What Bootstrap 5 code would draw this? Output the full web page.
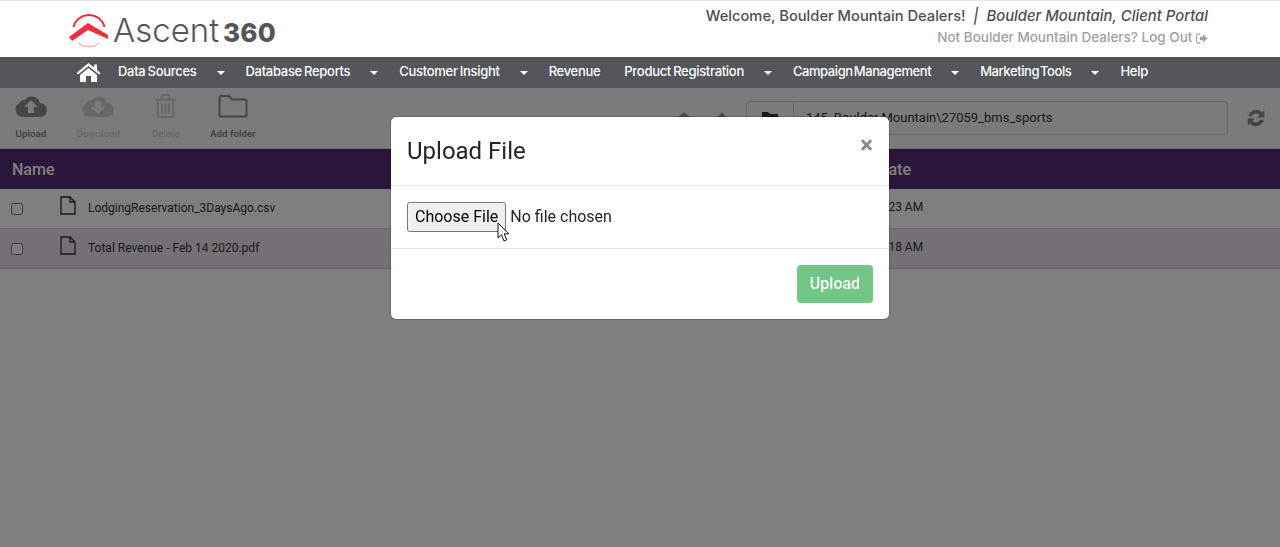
<!DOCTYPE html>
<html lang="en">
<head>
    <meta charset="UTF-8">
    <meta name="viewport" content="width=device-width, initial-scale=1.0">
    <title>Ascent360 Client Portal</title>
    <link href="https://cdn.jsdelivr.net/npm/bootstrap@5.3.3/dist/css/bootstrap.min.css" rel="stylesheet">
    <style>
        html, body { height: 100%; }
        body { background: #fff; font-family: Roboto, "Liberation Sans", sans-serif; overflow: hidden; }
        .top-area { position: relative; z-index: 1052; }
        .brand-bar { height: 57px; border-top: 1px solid #e4e4e4; background: #fff; padding-left: 69px; padding-right: 72px; }
        .logo-mark { margin-top: 3px; }
        .logo-word { font-family: Inter, sans-serif; font-weight: 300; font-size: 33px; line-height: 1; color: #55565b; margin-left: 4px; margin-top: 2px; }
        .logo-num { font-family: Inter, sans-serif; font-weight: 800; font-size: 26px; line-height: 1; color: #55565b; margin-left: 4px; margin-top: 7px; letter-spacing: .2px; }
        .welcome { font-family: Inter, sans-serif; font-size: 14.7px; font-weight: 500; color: #4d4d52; line-height: 18px; margin-top: 6px; }
        .welcome em { font-size: 14.85px; }
        .logout { font-family: Inter, sans-serif; font-size: 13.5px; font-weight: 500; color: #a0a0a0; line-height: 18px; margin-top: 3px; }
        .main-menu { height: 31px; background: #55565b; padding-left: 76px; }
        .main-menu a { font-family: Inter, sans-serif; font-size: 13px; font-weight: 500; color: #fff; text-decoration: none; white-space: nowrap; letter-spacing: -.3px; word-spacing: -1px; padding-bottom: 2px; }
        .main-menu a.home-link { padding-bottom: 0; margin-right: 17px; }
        .main-menu a.menu-tight { letter-spacing: -.42px; word-spacing: -2px; }
        .menu-caret { width: 0; height: 0; margin-left: 20px; margin-right: 21px; border-left: 4px solid transparent; border-right: 4px solid transparent; border-top: 4px solid #fff; }
        .tool-row { height: 61px; background: #f7f7f7; border-bottom: 1px solid #ddd; gap: 5.3px; }
        .tool-btn { width: 62px; padding-top: 6px; color: #7c7c7c; }
        .tool-btn span { display: block; font-size: 9.8px; font-weight: 500; line-height: 12px; margin-top: 10px; white-space: nowrap; }
        .tool-btn.is-off { color: #cfcfcf; }
        .tool-btn svg { display: block; height: 24px; margin: 0 auto; }
        .path-box { width: 482px; height: 34px; margin-left: 18px; margin-right: 18px; border: 1px solid #ccc; border-radius: 4px; background: #f7f7f7; font-size: 13px; color: #333; }
        .path-icon { width: 47px; border-right: 1px solid #ccc; }
        .refresh-icon { margin-right: 14px; }
        .file-table { table-layout: fixed; width: 100%; margin: 0; font-size: 12px; color: #333; border-collapse: separate; border-spacing: 0; }
        .file-table th { height: 40px; padding: 1px 0 0 12px; background: #542c74; color: #fff; font-size: 16px; font-weight: 500; vertical-align: middle; border: 0; }
        .file-table td { height: 40px; padding: 0; vertical-align: middle; border-bottom: 1px solid #ccc; background: #fff; }
        .file-table tr.row-alt td { background: #ecdff0; }
        .name-cell { display: flex; align-items: center; }
        .name-cell input { width: 12px; height: 12px; margin: 1px 0 0 11px; }
        .name-cell svg { margin-left: 37px; margin-right: 12px; position: relative; top: -3px; }
        .name-cell span { position: relative; top: -1px; }
        .time-cell span { position: relative; top: -2px; padding-left: 6px; }
        .modal-backdrop.show { opacity: .5; }
        .upload-dialog { width: 500px; max-width: 500px; margin: 116px auto 0; }
        .upload-dialog .modal-content { border-radius: 6px; }
        .upload-dialog .modal-header { height: 69px; padding: 0 16px; border-bottom: 1px solid #e5e5e5; }
        .upload-dialog .modal-title { font-size: 24px; font-weight: 400; color: #212529; }
        .upload-close { font-size: 24px; font-weight: 700; line-height: 1; color: #8a8a8a; background: none; border: 0; padding: 0; margin-top: -13px; }
        .upload-dialog .modal-body { height: 62px; flex: none; padding: 16px; position: relative; font-size: 16px; }
        .upload-dialog .modal-footer { height: 71px; align-items: flex-start; padding: 16px; border-top: 1px solid #e5e5e5; }
        .upload-dialog input[type=file] { font-family: Roboto, sans-serif; font-size: 16px; color: #212529; }
        .send-btn { width: 76px; height: 38px; margin: 0; padding: 0; font-size: 16px; font-weight: 500; color: #fff; background: #72c687; border: 0; border-radius: 4px; }
        .mouse-arrow { position: absolute; left: 106px; top: 36px; }
    </style>
</head>
<body>
    <div class="top-area">
        <header class="brand-bar d-flex justify-content-between">
            <div class="d-flex align-items-center">
                <svg class="logo-mark" width="40" height="34" viewBox="0 0 40 34">
                    <path d="M4.500 13A16 16 0 0 1 35.500 13" fill="none" stroke="#ee2e3d" stroke-width="2"/>
                    <path d="M9 29A16 16 0 0 0 30 29" fill="none" stroke="#f39aa2" stroke-width="1"/>
                    <path d="M0 23L19 9L39 21L39 25L19 16L3 27Z" fill="#ee2e3d"/>
                </svg>
                <span class="logo-word">Ascent</span><span class="logo-num">360</span>
            </div>
            <div class="text-end">
                <div class="welcome">Welcome, Boulder Mountain Dealers! &nbsp;<em>|&nbsp; Boulder Mountain, Client Portal</em></div>
                <div class="logout">Not Boulder Mountain Dealers? Log Out
                    <svg width="12" height="11" viewBox="0 0 11 10"><path d="M4 1H1.500A1 1 0 0 0 .5 2V8A1 1 0 0 0 1.500 9H4" fill="none" stroke="#a0a0a0"/><path d="M3.500 3.500H6.500V1L10.500 5L6.500 9V6.500H3.500Z" fill="#a0a0a0"/></svg>
                </div>
            </div>
        </header>
        <nav class="main-menu d-flex align-items-center">
            <a href="#" class="home-link d-flex">
                <svg width="25" height="21" viewBox="0 0 25 21"><path d="M12.500 1L18 5.500V2.500H21V8L24.500 11L23 12.500L12.500 4L2 12.500L.5 11Z" fill="#fff"/><path d="M12.500 6L21 13V20H15V14H10V20H4V13Z" fill="#fff"/></svg>
            </a>
            <a href="#">Data Sources</a><i class="menu-caret"></i>
            <a href="#">Database Reports</a><i class="menu-caret"></i>
            <a href="#">Customer Insight</a><i class="menu-caret"></i>
            <a href="#" class="me-4">Revenue</a>
            <a href="#">Product Registration</a><i class="menu-caret"></i>
            <a href="#" class="menu-tight">Campaign Management</a><i class="menu-caret"></i>
            <a href="#" class="menu-tight">Marketing Tools</a><i class="menu-caret"></i>
            <a href="#">Help</a>
        </nav>
    </div>

    <div class="tool-row d-flex">
        <div class="tool-btn text-center">
            <svg viewBox="0 0 32 24"><path d="M8 23A7.500 7.500 0 0 1 4.500 9A5 5 0 0 1 10 6A8.500 8.500 0 0 1 25 9A7 7 0 0 1 25 23Z" fill="#8c8c8c"/><path d="M16 6L23 13H19V19H13V13H9Z" fill="#f7f7f7"/></svg>
            <span>Upload</span>
        </div>
        <div class="tool-btn is-off text-center">
            <svg viewBox="0 0 32 24"><path d="M8 23A7.500 7.500 0 0 1 4.500 9A5 5 0 0 1 10 6A8.500 8.500 0 0 1 25 9A7 7 0 0 1 25 23Z" fill="#cfcfcf"/><path d="M16 20L23 13H19V7H13V13H9Z" fill="#f7f7f7"/></svg>
            <span>Download</span>
        </div>
        <div class="tool-btn is-off text-center">
            <svg viewBox="0 0 24 25"><path d="M1 6H23M8 6V2Q8 1 9 1H15Q16 1 16 2V6M4 6V22Q4 24 6 24H18Q20 24 20 22V6M8.500 10V20M12 10V20M15.500 10V20" fill="none" stroke="#cfcfcf" stroke-width="2"/></svg>
            <span>Delete</span>
        </div>
        <div class="tool-btn text-center">
            <svg viewBox="0 0 30 24"><path d="M3 2H11L14 5.500H27A1.500 1.500 0 0 1 28.500 7V21A1.500 1.500 0 0 1 27 22.500H3A1.500 1.500 0 0 1 1.500 21V3.500A1.500 1.500 0 0 1 3 2Z" fill="none" stroke="#8c8c8c" stroke-width="2"/></svg>
            <span>Add folder</span>
        </div>
        <div class="ms-auto d-flex align-items-center">
            <svg width="16" height="14" viewBox="0 0 16 14" class="me-4"><path d="M8 1L15.500 7.500H13V13H9.500V9H6.500V13H3V7.500H.5Z" fill="#999"/></svg>
            <svg width="12" height="14" viewBox="0 0 12 14"><path d="M6 1L11.500 7H8V13H4V7H.5Z" fill="#999"/></svg>
            <div class="path-box d-flex">
                <div class="path-icon d-flex align-items-center justify-content-center">
                    <svg width="18" height="14" viewBox="0 0 18 14"><path d="M1 1H7L9 3H17V13H1Z" fill="#333"/></svg>
                </div>
                <div class="d-flex align-items-center ps-2 ms-1">145_Boulder Mountain\27059_bms_sports</div>
            </div>
            <svg class="refresh-icon" width="20" height="20" viewBox="0 0 18 18"><path d="M2 7.500A7.300 7.300 0 0 1 14.500 4L16.500 2V8.500H10L12.300 6.200A4.300 4.300 0 0 0 5.300 7.500ZM16 10.500A7.300 7.300 0 0 1 3.500 14L1.500 16V9.500H8L5.700 11.800A4.300 4.300 0 0 0 12.700 10.500Z" fill="#888"/></svg>
        </div>
    </div>

    <table class="file-table">
        <colgroup><col style="width: 866px"><col></colgroup>
        <thead>
            <tr><th>Name</th><th>Date</th></tr>
        </thead>
        <tbody>
            <tr>
                <td><div class="name-cell"><input type="checkbox"><svg width="16" height="19" viewBox="0 0 16 19"><path d="M1 1H10L15 6V18H1ZM10 1V6H15" fill="none" stroke="#333" stroke-width="1.300"/></svg><span>LodgingReservation_3DaysAgo.csv</span></div></td>
                <td class="time-cell"><span>10:23 AM</span></td>
            </tr>
            <tr class="row-alt">
                <td><div class="name-cell"><input type="checkbox"><svg width="16" height="19" viewBox="0 0 16 19"><path d="M1 1H10L15 6V18H1ZM10 1V6H15" fill="none" stroke="#333" stroke-width="1.300"/></svg><span>Total Revenue - Feb 14 2020.pdf</span></div></td>
                <td class="time-cell"><span>10:18 AM</span></td>
            </tr>
        </tbody>
    </table>

    <div class="modal-backdrop show"></div>
    <div class="modal d-block">
        <div class="modal-dialog upload-dialog">
            <div class="modal-content">
                <div class="modal-header justify-content-between">
                    <h5 class="modal-title">Upload File</h5>
                    <button type="button" class="upload-close">&times;</button>
                </div>
                <div class="modal-body">
                    <input type="file">
                    <svg class="mouse-arrow" width="14" height="21" viewBox="0 0 14 21"><path d="M1 1V16L4.500 12.800L7 19L9.700 17.800L7.200 11.800H12Z" fill="#fff" stroke="#111"/></svg>
                </div>
                <div class="modal-footer">
                    <button type="button" class="send-btn">Upload</button>
                </div>
            </div>
        </div>
    </div>
    <script src="https://cdn.jsdelivr.net/npm/bootstrap@5.3.3/dist/js/bootstrap.bundle.min.js"></script>
</body>
</html>
